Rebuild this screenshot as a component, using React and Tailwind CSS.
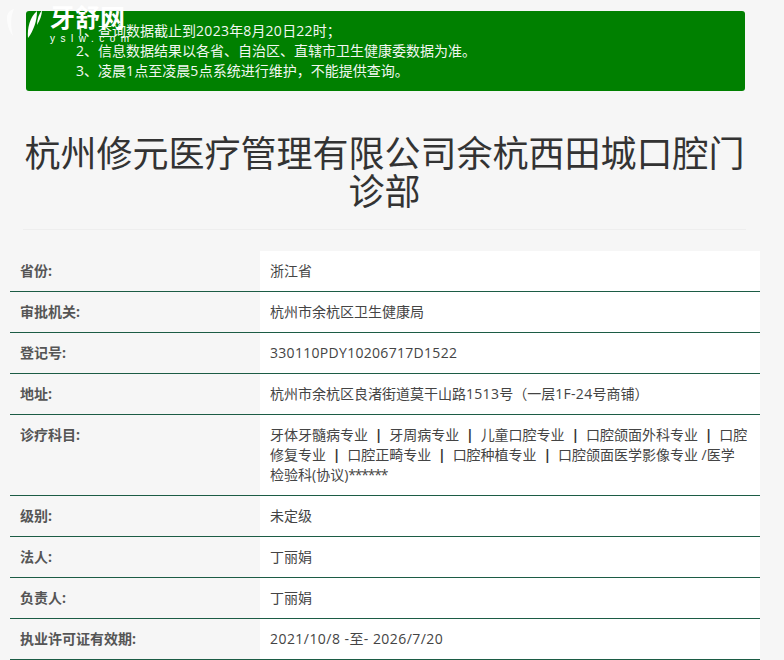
const Latin = ({ children }) => <span className="tracking-[0.3px]">{children}</span>;
const Bar = () => <span className="mx-[6.8px] font-bold text-[#333]">|</span>;

const rows = [
  ["省份:", "浙江省"],
  ["审批机关:", "杭州市余杭区卫生健康局"],
  ["登记号:", <Latin>330110PDY10206717D1522</Latin>],
  ["地址:", <>杭州市余杭区良渚街道莫干山路<Latin>1513</Latin>号（一层<Latin>1F-24</Latin>号商铺）</>],
  ["诊疗科目:", (
    <span className="whitespace-nowrap">
      牙体牙髓病专业<Bar />牙周病专业<Bar />儿童口腔专业<Bar />口腔颌面外科专业<Bar />口腔<br />修复专业<Bar />口腔正畸专业<Bar />口腔种植专业<Bar />口腔颌面医学影像专业 /医学<br />检验科(协议)<span className="tracking-[-1.2px]">******</span>
    </span>
  )],
  ["级别:", "未定级"],
  ["法人:", "丁丽娟"],
  ["负责人:", "丁丽娟"],
  ["执业许可证有效期:", <span className="tracking-[0.45px]">2021/10/8 -至- 2026/7/20</span>],
];

export default function App() {
  return (
    <div className='relative h-[660px] w-[784px] overflow-hidden bg-[#f6f6f6] font-["Open_Sans","Noto_Sans_CJK_SC",sans-serif] text-[14px] leading-5 text-[#444]'>
      <div className="absolute left-[4px] top-[6px] flex items-start gap-[6px] text-white">
        <svg width="40" height="34" viewBox="0 0 40 34" className="overflow-visible">
          <path d="M3 12 C3 7 6 4 10 3 C7 9 6 18 9 30 C5 25 3 18 3 12 Z" fill="#fff" opacity="0.7" />
          <path d="M33 5 C33 14 30 24 24 32 C23 22 26 11 33 5 Z" fill="#fff" />
          <path d="M38 4 C38 9 36 14 33 19 C33 13 35 8 38 4 Z" fill="#fff" />
        </svg>
        <div className="flex flex-col">
          <span className='font-["Liberation_Serif","Noto_Sans_CJK_SC",serif] text-[25px] font-bold leading-[26px]'>牙舒网</span>
          <span className='mt-[2px] font-["Liberation_Sans",sans-serif] text-[10px] leading-[10px] tracking-[5.5px]'>yslw.com</span>
        </div>
      </div>
      <div className="px-[26px] pt-[11px] pr-[39px]">
        <div className="rounded-[3px] bg-[#008000] py-[10px] pl-[50px] text-[#f2f7f2]">
          <p>1、查询数据截止到<Latin>2023</Latin>年<Latin>8</Latin>月<Latin>20</Latin>日<Latin>22</Latin>时；</p>
          <p>2、信息数据结果以各省、自治区、直辖市卫生健康委数据为准。</p>
          <p>3、凌晨<Latin>1</Latin>点至凌晨<Latin>5</Latin>点系统进行维护，不能提供查询。</p>
        </div>
        <h1 className="-ml-[3px] -mr-[1px] mt-[44px] border-b border-[#eeeeee] pb-[18px] text-center text-[36px] font-normal leading-[38px] text-[#333]">
          杭州修元医疗管理有限公司余杭西田城口腔门诊部
        </h1>
      </div>
      <div className="ml-[10px] mt-[21px] w-[750px]">
        {rows.map(([k, v]) => (
          <div key={k} className="flex border-b border-[#1c5c45]">
            <div className="w-[250px] shrink-0 p-[10px] font-bold text-[#555]">{k}</div>
            <div className="flex-1 bg-white p-[10px]">{v}</div>
          </div>
        ))}
      </div>
    </div>
  );
}
